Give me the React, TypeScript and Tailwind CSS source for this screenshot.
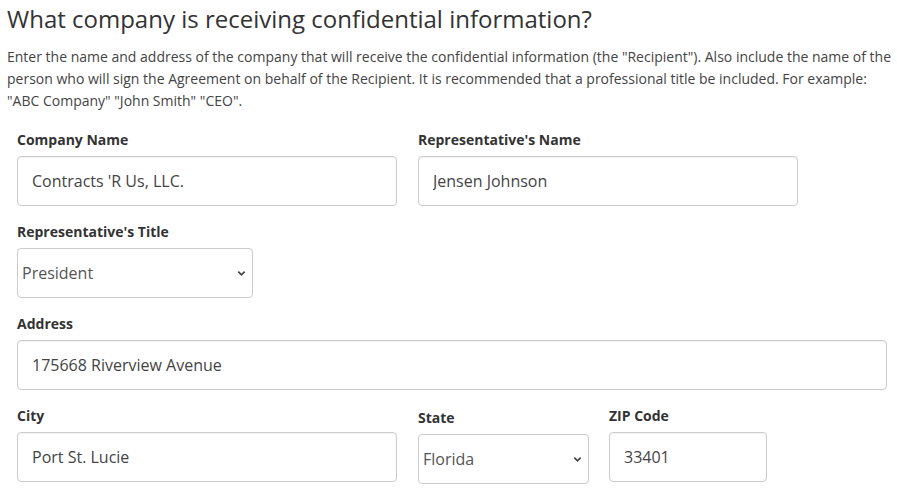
import React from "react";

const font = { fontFamily: '"Open Sans", "Noto Sans", sans-serif' };

function Label({ children, className = "" }: { children: React.ReactNode; className?: string }) {
  return <label className={"block text-[14px] font-bold text-[#333] leading-5 " + className}>{children}</label>;
}

function TextInput({ value, width }: { value: string; width: string }) {
  return (
    <input
      readOnly
      value={value}
      className={`${width} h-[50px] rounded-[4px] border border-[#ccc] bg-white px-[14px] text-[16px] text-[#444] shadow-[inset_0_1px_1px_rgba(0,0,0,0.05)] outline-none`}
      style={font}
    />
  );
}

function Select({ value, width }: { value: string; width: string }) {
  return (
    <div className={`${width} relative h-[50px] rounded-[4px] border border-[#ccc] bg-white`}>
      <div className="flex h-full items-center pl-[4px] text-[16px] text-[#555]">{value}</div>
      <svg
        className="absolute right-[6px] top-1/2 -translate-y-1/2"
        width="9"
        height="9"
        viewBox="0 0 10 10"
        fill="none"
        stroke="#444"
        strokeWidth="1.9"
      >
        <path d="M1.5 3.5 L5 7 L8.5 3.5" />
      </svg>
    </div>
  );
}

export default function App() {
  return (
    <div className="w-[897px] h-[492px] overflow-hidden bg-white text-[#333]" style={font}>
      <div className="pl-[7px] pt-[2px]">
        <h1 className="text-[24px] leading-[34px] font-normal text-[#333]">
          What company is receiving confidential information?
        </h1>
        <p className="mt-[10px] text-[14px] leading-[22px] text-[#444]">
          Enter the name and address of the company that will receive the confidential information (the "Recipient"). Also include the name of the person who will sign the Agreement on behalf of the Recipient. It is recommended that a professional title be included. For example: "ABC Company" "John Smith" "CEO".
        </p>
      </div>

      <div className="px-[17px] pt-[18px] flex flex-col gap-[16px]">
        <div className="flex gap-[21px]">
          <div className="flex flex-col gap-[6px]">
            <Label>Company Name</Label>
            <TextInput value="Contracts 'R Us, LLC." width="w-[380px]" />
          </div>
          <div className="flex flex-col gap-[6px]">
            <Label>Representative's Name</Label>
            <TextInput value="Jensen Johnson" width="w-[380px]" />
          </div>
        </div>

        <div className="flex flex-col gap-[6px]">
          <Label>Representative's Title</Label>
          <Select value="President" width="w-[236px]" />
        </div>

        <div className="flex flex-col gap-[6px]">
          <Label>Address</Label>
          <TextInput value="175668 Riverview Avenue" width="w-[870px]" />
        </div>

        <div className="flex gap-[21px]">
          <div className="flex flex-col gap-[6px]">
            <Label>City</Label>
            <TextInput value="Port St. Lucie" width="w-[380px]" />
          </div>
          <div className="flex gap-[20px]">
            <div className="flex flex-col gap-[6px] pt-[2px]">
              <Label>State</Label>
              <Select value="Florida" width="w-[171px]" />
            </div>
            <div className="flex flex-col gap-[6px]">
              <Label>ZIP Code</Label>
              <TextInput value="33401" width="w-[158px]" />
            </div>
          </div>
        </div>
      </div>
    </div>
  );
}
